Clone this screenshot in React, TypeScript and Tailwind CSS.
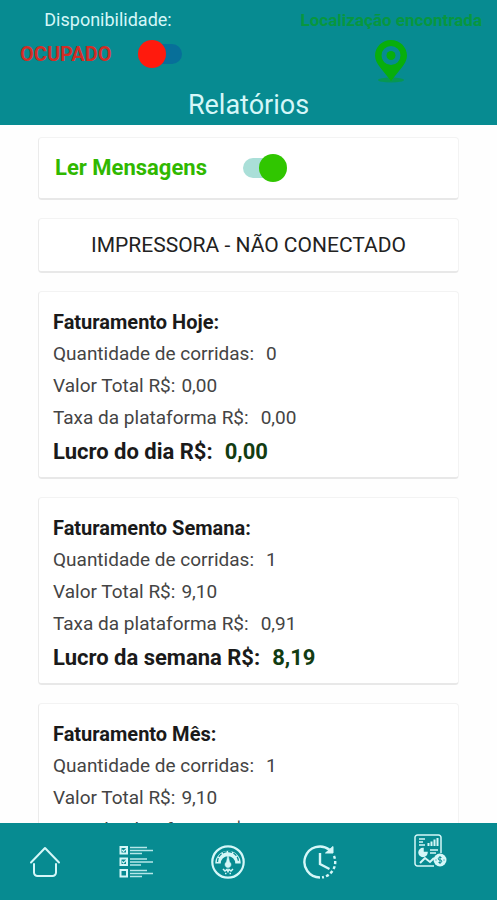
import { useState } from 'react';

type Report = {
  title: string;
  rides: string;
  total: string;
  fee: string;
  profitLabel: string;
  profit: string;
};

const reports: Report[] = [
  { title: 'Faturamento Hoje:', rides: '0', total: '0,00', fee: '0,00', profitLabel: 'Lucro do dia R$:', profit: '0,00' },
  { title: 'Faturamento Semana:', rides: '1', total: '9,10', fee: '0,91', profitLabel: 'Lucro da semana R$:', profit: '8,19' },
  { title: 'Faturamento Mês:', rides: '1', total: '9,10', fee: '0,91', profitLabel: 'Lucro do mês R$:', profit: '8,19' },
];

const card = 'rounded border border-[#f3f3f3] border-b-2 border-l-[#ebebeb] border-b-[#e8e8e8] bg-white';

function ReportCard({ report }: { report: Report }) {
  return (
    <section className={`${card} px-3.5 pt-[14px] pb-[7px]`}>
      <h2 className="text-[20px] leading-8 font-bold text-[#1a1a1a]">{report.title}</h2>
      <p className="flex gap-3">
        <span>Quantidade de corridas:</span>
        <span>{report.rides}</span>
      </p>
      <p className="flex gap-1.5">
        <span>Valor Total R$:</span>
        <span>{report.total}</span>
      </p>
      <p className="flex gap-3">
        <span>Taxa da plataforma R$:</span>
        <span>{report.fee}</span>
      </p>
      <p className="flex gap-3 text-[22px] leading-9 font-bold text-[#1a1a1a]">
        <span>{report.profitLabel}</span>
        <span className="text-[#123c12]">{report.profit}</span>
      </p>
    </section>
  );
}

function PinIcon() {
  return (
    <svg className="h-[44px] w-8" viewBox="0 0 32 44" fill="none">
      <ellipse cx="16" cy="40" rx="13" ry="2.500" fill="#08a02a" opacity="0.6" />
      <path
        fillRule="evenodd"
        d="M16 0C7.200 0 0 7 0 15.600c0 4.600 2.400 8.600 5.600 12.400L16 41l10.400-13C29.600 24.200 32 20.200 32 15.600 32 7 24.800 0 16 0zm0 6a9.500 9.500 0 1 1 0 19 9.500 9.500 0 0 1 0-19z"
        fill="#08ae0c"
      />
      <circle cx="16" cy="15.500" r="4.500" fill="#08ae0c" />
    </svg>
  );
}

function HomeIcon() {
  return (
    <svg className="h-[34px] w-8" viewBox="0 0 32 34" fill="none" stroke="currentColor" strokeWidth="2" strokeLinecap="round" strokeLinejoin="round">
      <path d="M2 17.500 16 3l14 14.500" />
      <path d="M5 19v8.500a3.500 3.500 0 0 0 3.500 3.500h15a3.500 3.500 0 0 0 3.500-3.500V19" />
    </svg>
  );
}

function ListIcon() {
  return (
    <svg className="h-[34px] w-[34px]" viewBox="0 0 34 34" fill="none" stroke="currentColor" strokeWidth="2">
      <rect x="1.500" y="2" width="6.500" height="6.500" />
      <rect x="1.500" y="13.500" width="6.500" height="6.500" />
      <rect x="1.500" y="25" width="6.500" height="6.500" />
      <path d="m3 5 1.500 1.500 3-3M3 16.500 4.500 18l3-3" strokeWidth="1.200" />
      <g strokeWidth="1.600" opacity="0.85">
        <path d="M11 2.500h17M11 5.500h23M11 8.500h12M11 14h17M11 17h23M11 20h11M11 25.500h17M11 28.500h23M11 31.500h12" />
      </g>
    </svg>
  );
}

function GaugeIcon() {
  return (
    <svg className="h-[34px] w-[34px]" viewBox="0 0 34 34" fill="none" stroke="currentColor">
      <circle cx="17" cy="17" r="15.700" strokeWidth="2.200" />
      <path d="M7 18.500a10 10 0 0 1 20 0" strokeWidth="5.500" />
      <path d="M6.500 17a10.500 10.500 0 0 1 21 0" stroke="#078b91" strokeWidth="1.300" strokeDasharray="4 1.500" />
      <path d="M17 9.500 15.500 17a3 3 0 1 0 3 0z" fill="currentColor" strokeWidth=".5" />
      <path d="m12 24 2 2 2-1.500 1 2 1-2 2 1.500 2-2M14 28.500h1.500M18.500 28.500H20" strokeWidth="1.500" />
    </svg>
  );
}

function ClockIcon() {
  return (
    <svg className="h-[34px] w-[34px]" viewBox="0 0 34 34" fill="none" stroke="currentColor" strokeWidth="2.400">
      <path d="M17 32.500A15.500 15.500 0 1 1 26.500 4.800" />
      <path d="M31 11a15.500 15.500 0 0 1-12 21.400" strokeDasharray="3 2.200" />
      <path d="M30 1.500V8h-7.500z" fill="currentColor" strokeWidth="1" />
      <path d="M17 8v11l9.500 5" />
    </svg>
  );
}

function ReportIcon() {
  return (
    <svg className="h-[34px] w-[34px]" viewBox="0 0 34 34" fill="none" stroke="currentColor" strokeWidth="1.500">
      <path d="M20 32H3.500A2.500 2.500 0 0 1 1 29.500v-26A2.500 2.500 0 0 1 3.500 1h21A2.500 2.500 0 0 1 27 3.500V19" />
      <path d="M5 5h6M5 8h4M5 11h6" />
      <path d="M14.500 12V9M17.500 12V7.500M20.500 12V5.500M23.500 12V4" strokeWidth="2" />
      <path d="M9 14.500a4 4 0 1 0 4 4H9z" fill="currentColor" />
      <path d="M16 16h8M16 19h6" />
      <path d="m6 29 5-5 5 4 4-4" strokeWidth="2" />
      <circle cx="26" cy="26" r="6.500" fill="currentColor" stroke="none" />
      <path d="M27.500 23.500h-2a1.200 1.200 0 0 0 0 2.500h1a1.200 1.200 0 0 1 0 2.500h-2M26 22v8M21.500 26h1M29.500 26h1" stroke="#078b91" strokeWidth="1" />
    </svg>
  );
}

export default function App() {
  const [available, setAvailable] = useState(false);
  const [readMessages, setReadMessages] = useState(true);

  return (
    <div className="flex h-screen flex-col overflow-hidden bg-[#fefefe] font-[Roboto,sans-serif]">
      <header className="shrink-0 bg-[#078b91] pt-2">
        <div className="flex items-start justify-between pr-[15px] pl-5">
          <div className="w-44">
            <p className="text-center text-[18px] leading-6 text-[#d5f7f8]">Disponibilidade:</p>
            <label className="mt-2 flex h-7 items-center gap-[30px] text-[20px] font-bold text-[#d22d25]">
              {available ? 'DISPONÍVEL' : 'OCUPADO'}
              <input
                type="checkbox"
                role="switch"
                checked={available}
                onChange={(e) => setAvailable(e.target.checked)}
                className="relative h-5 w-10 appearance-none rounded-full bg-[#076f99] before:absolute before:-top-1 before:left-[-4px] before:size-7 before:rounded-full before:bg-[#ff1a0d] checked:before:left-4 checked:before:bg-[#30c600]"
              />
            </label>
          </div>
          <div className="flex flex-col items-center">
            <p className="text-[17px] leading-6 font-bold text-[#07973f]">Localização encontrada</p>
            <div className="mt-2 h-[44px]">
              <PinIcon />
            </div>
          </div>
        </div>
        <h1 className="pt-px text-center text-[27px] leading-10 text-[#d5f7f8]">Relatórios</h1>
      </header>

      <main className="flex min-h-0 flex-1 flex-col gap-[18px] overflow-y-auto px-[38px] pt-3 text-[19px] leading-8 text-[#444] [scrollbar-width:none]">
        <label className={`${card} flex shrink-0 items-center gap-9 px-4 py-[14px] text-[22px] font-bold text-[#30b800]`}>
          Ler Mensagens
          <input
            type="checkbox"
            role="switch"
            checked={readMessages}
            onChange={(e) => setReadMessages(e.target.checked)}
            className="relative h-5 w-10 appearance-none rounded-full bg-[#aadfd8] before:absolute before:-top-1 before:left-[-4px] before:size-7 before:rounded-full before:bg-[#999] checked:before:left-4 checked:before:bg-[#30c600]"
          />
        </label>
        <button type="button" className={`${card} shrink-0 py-2.5 text-[21px] text-[#222]`}>
          IMPRESSORA - NÃO CONECTADO
        </button>
        {reports.map((report) => (
          <ReportCard key={report.title} report={report} />
        ))}
      </main>

      <nav className="flex h-[77px] shrink-0 items-start bg-[#078b91] pt-[11px] pr-[49px] pl-[29px] text-[#d5f7f8]">
        <div className="flex gap-[58px] pt-[11px]">
          <a href="#inicio" aria-label="Início"><HomeIcon /></a>
          <a href="#corridas" aria-label="Corridas"><ListIcon /></a>
          <a href="#taximetro" aria-label="Taxímetro"><GaugeIcon /></a>
          <a href="#historico" aria-label="Histórico"><ClockIcon /></a>
        </div>
        <a href="#relatorios" aria-label="Relatórios" className="ml-auto"><ReportIcon /></a>
      </nav>
    </div>
  );
}
